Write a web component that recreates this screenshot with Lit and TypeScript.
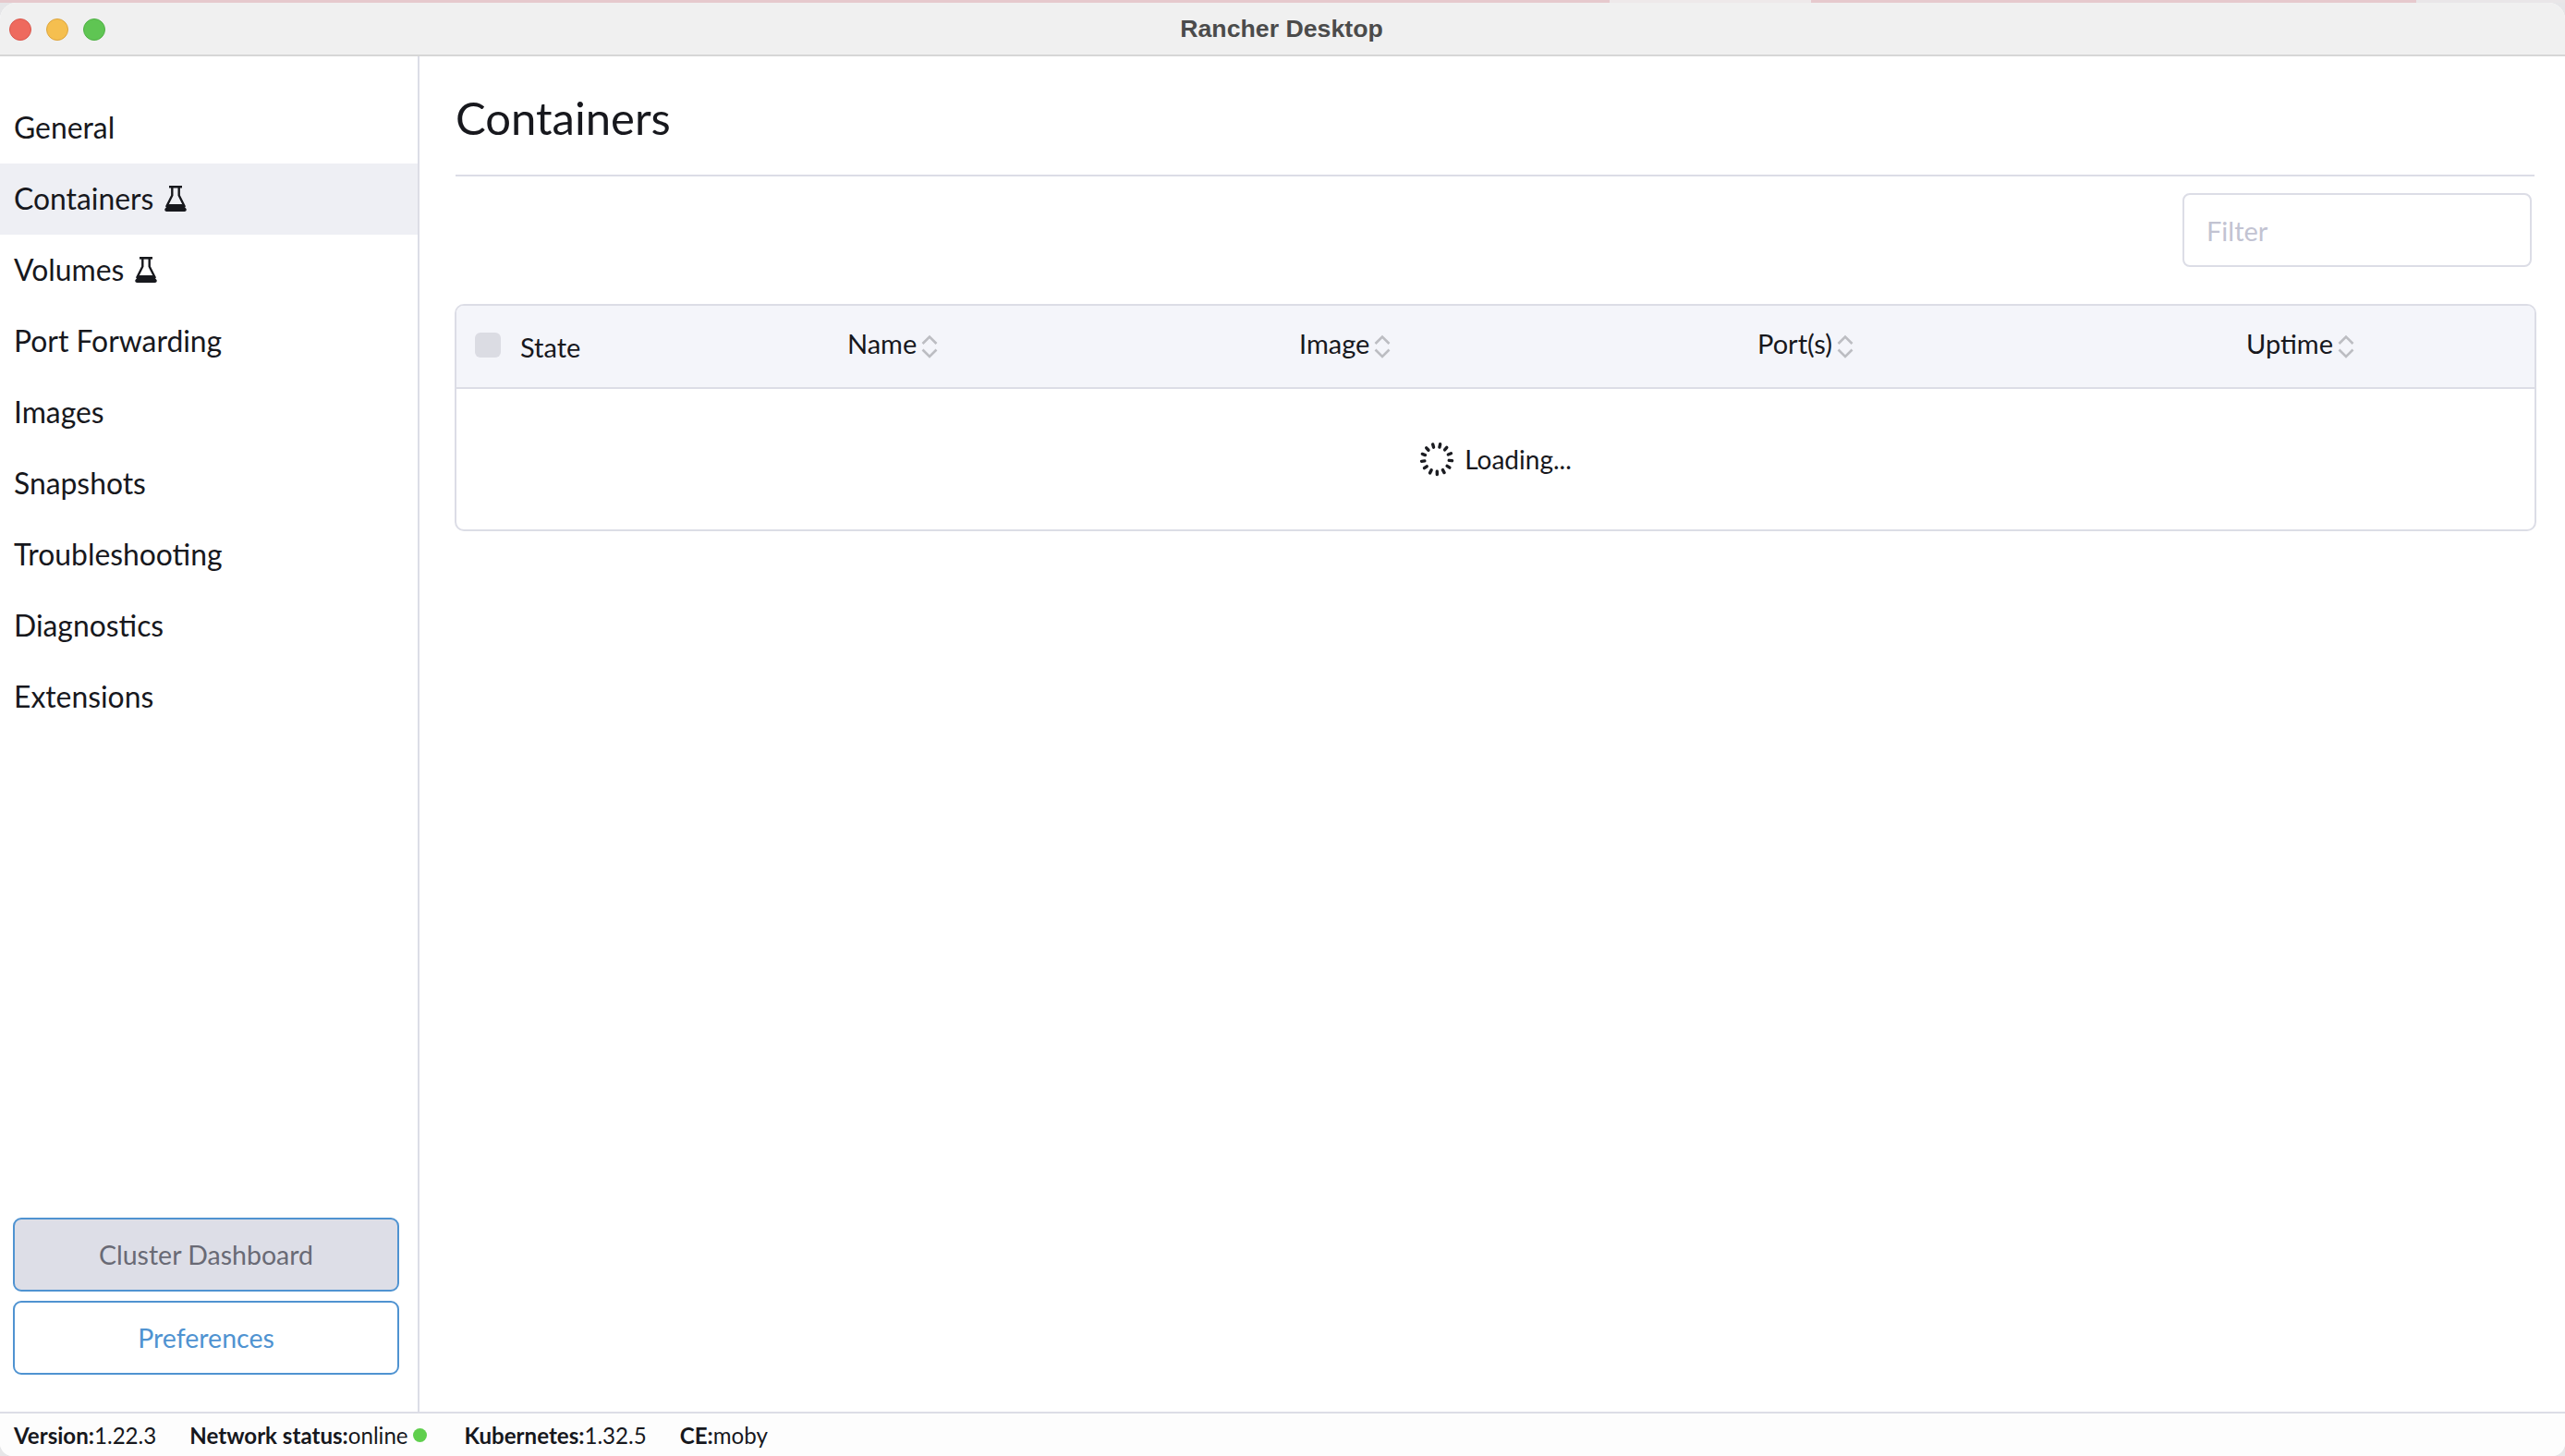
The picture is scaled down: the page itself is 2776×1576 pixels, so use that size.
import { LitElement, html, css, svg } from "lit";
import { customElement } from "lit/decorators.js";

const NAV = [
  { label: "General" },
  { label: "Containers", flask: true, active: true },
  { label: "Volumes", flask: true },
  { label: "Port Forwarding" },
  { label: "Images" },
  { label: "Snapshots" },
  { label: "Troubleshooting" },
  { label: "Diagnostics" },
  { label: "Extensions" },
];

const COLUMNS = ["Name", "Image", "Port(s)", "Uptime"];

const flask = html`<svg class="flask" viewBox="0 0 24 28">
  <path d="M5 1.300h14" fill="none" stroke="currentColor" stroke-width="2.600" />
  <path d="M8.300 1.500v9L2 23M15.700 1.500v9L22 23" fill="none" stroke="currentColor" stroke-width="2.400" />
  <path d="M4.500 20h15l4 5c.7 1.400-.2 3-2 3H2.500c-1.800 0-2.700-1.600-2-3z" fill="currentColor" />
</svg>`;

const sortIcon = html`<svg class="sort" viewBox="0 0 18 26">
  <path d="M1.500 10L9 2.500l7.500 7.500M1.500 16.500L9 24l7.500-7.500" fill="none" stroke="#bcbdc2" stroke-width="2.600" />
</svg>`;

// ticks of the loading spinner
const spinner = html`<svg class="spinner" viewBox="0 0 40 40">
  ${Array.from({ length: 13 }, (_, i) => {
    const a = (i / 13) * Math.PI * 2 + 0.1;
    const x1 = 20 + Math.cos(a) * 14;
    const y1 = 20 + Math.sin(a) * 14;
    const x2 = 20 + Math.cos(a) * 17.5;
    const y2 = 20 + Math.sin(a) * 17.5;
    return svg`<line x1=${x1} y1=${y1} x2=${x2} y2=${y2} stroke="#1b1c21" stroke-width="3.600" stroke-linecap="round" />`;
  })}
</svg>`;

@customElement("app-root")
export class AppRoot extends LitElement {
  static styles = css`
    :host {
      display: block;
      height: 1576px;
      background: #e6e6e8;
      font-family: Lato, "Open Sans", sans-serif;
      color: #17181d;
      overflow: hidden;
    }

    .strip {
      height: 3px;
      background: linear-gradient(
        to right,
        #e6c9cd 0,
        #e6c9cd 1742px,
        #eee9ea 1742px,
        #eee9ea 1960px,
        #e6c9cd 1960px,
        #e6c9cd 2615px,
        #e9e6e8 2615px
      );
    }

    .window {
      display: flex;
      flex-direction: column;
      height: 1573px;
      background: #fff;
      border-radius: 18px 18px 14px 14px;
      overflow: hidden;
    }

    .titlebar {
      position: relative;
      flex: none;
      display: flex;
      align-items: center;
      justify-content: center;
      height: 58px;
      box-sizing: border-box;
      padding-right: 2px;
      background: #f0f0f0;
      border-bottom: 2px solid #d6d6d6;
      font-family: "Liberation Sans", Arial, sans-serif;
      font-weight: 700;
      font-size: 26.700px;
      color: #4b4b4b;
    }

    .lights {
      position: absolute;
      left: 10px;
      top: 17px;
      display: flex;
      gap: 16px;
    }

    .light {
      width: 24px;
      height: 24px;
      border-radius: 50%;
      box-sizing: border-box;
    }

    .red {
      background: #ee6a5e;
      border: 1px solid #d9584e;
    }

    .yellow {
      background: #f5bf4f;
      border: 1px solid #dca53e;
    }

    .green {
      background: #5fc553;
      border: 1px solid #50b046;
    }

    .body {
      flex: 1;
      display: flex;
      min-height: 0;
    }

    .sidebar {
      flex: none;
      width: 454px;
      box-sizing: border-box;
      border-right: 2px solid #dcdde6;
      display: flex;
      flex-direction: column;
      padding-top: 39px;
    }

    .nav-item {
      display: flex;
      align-items: center;
      gap: 12px;
      height: 77px;
      box-sizing: border-box;
      padding: 0 0 2px 15px;
      font-size: 31.850px;
    }

    .nav-item.active {
      background: #eeeff4;
    }

    .flask {
      width: 24px;
      height: 28px;
    }

    .buttons {
      margin-top: auto;
      display: flex;
      flex-direction: column;
      gap: 10px;
      padding: 0 20px 40px 14px;
    }

    .btn {
      height: 80px;
      box-sizing: border-box;
      border: 2px solid #4f93d1;
      border-radius: 9px;
      display: flex;
      align-items: center;
      justify-content: center;
      font-size: 28.500px;
    }

    .btn.disabled {
      background: #dddee7;
      color: #696a75;
    }

    .btn.outline {
      background: #fff;
      color: #4f93d1;
    }

    .main {
      flex: 1;
      min-width: 0;
      padding: 0 33px 0 39px;
      display: flex;
      flex-direction: column;
    }

    h1 {
      margin: 0;
      height: 130px;
      box-sizing: border-box;
      padding-top: 36px;
      border-bottom: 2px solid #dcdde6;
      font-weight: 400;
      font-size: 49px;
      line-height: 60px;
    }

    .filter-row {
      display: flex;
      justify-content: flex-end;
      padding: 18px 3px 40px 0;
    }

    .filter {
      width: 378px;
      height: 80px;
      box-sizing: border-box;
      border: 2px solid #dcdde6;
      border-radius: 8px;
      padding-left: 24px;
      display: flex;
      align-items: center;
      font-size: 29px;
      color: #c2c3d2;
    }

    .table {
      margin-left: -1px;
      margin-right: -2px;
      border: 2px solid #dcdde6;
      border-radius: 10px;
      overflow: hidden;
    }

    .thead {
      display: grid;
      grid-template-columns: 423px 489px 496px 529px 1fr;
      height: 90px;
      box-sizing: border-box;
      background: #f4f5fa;
      border-bottom: 2px solid #dcdde6;
      font-size: 29px;
      align-items: center;
    }

    .th {
      display: flex;
      align-items: center;
      gap: 5px;
      padding-bottom: 7px;
    }

    .th-state {
      gap: 21px;
      padding: 0 0 0 20px;
    }

    .checkbox {
      width: 28px;
      height: 27px;
      margin-top: -4px;
      border-radius: 6px;
      background: #dbdce3;
    }

    .sort {
      width: 18px;
      height: 26px;
      margin-top: 7px;
    }

    .tbody {
      height: 152px;
      display: flex;
      align-items: center;
      justify-content: center;
      gap: 11px;
      font-size: 28px;
    }

    .spinner {
      width: 38px;
      height: 38px;
    }

    .status {
      flex: none;
      height: 48px;
      box-sizing: border-box;
      border-top: 2px solid #dcdde6;
      background: #fdfdfd;
      display: flex;
      align-items: center;
      padding-left: 15px;
      font-size: 24.100px;
    }

    .status b {
      font-weight: 700;
    }

    .stat {
      display: flex;
      align-items: center;
      margin-right: 36px;
    }

    .dot {
      width: 15px;
      height: 15px;
      border-radius: 50%;
      margin: 0 5px 0 5px;
      background: #5fcf4d;
    }
  `;

  render() {
    return html`
      <div class="strip"></div>
      <div class="window">
        <div class="titlebar">
          <div class="lights">
            <div class="light red"></div>
            <div class="light yellow"></div>
            <div class="light green"></div>
          </div>
          Rancher Desktop
        </div>
        <div class="body">
          <nav class="sidebar">
            ${NAV.map(
              (n) => html`<div class="nav-item ${n.active ? "active" : ""}">
                ${n.label}${n.flask ? flask : ""}
              </div>`,
            )}
            <div class="buttons">
              <div class="btn disabled">Cluster Dashboard</div>
              <div class="btn outline">Preferences</div>
            </div>
          </nav>
          <main class="main">
            <h1>Containers</h1>
            <div class="filter-row"><div class="filter">Filter</div></div>
            <div class="table">
              <div class="thead">
                <div class="th th-state"><span class="checkbox"></span>State</div>
                ${COLUMNS.map((c) => html`<div class="th">${c}${sortIcon}</div>`)}
              </div>
              <div class="tbody">${spinner}Loading...</div>
            </div>
          </main>
        </div>
        <footer class="status">
          <div class="stat"><b>Version:</b>1.22.3</div>
          <div class="stat"><b>Network status:</b>online<span class="dot"></span></div>
          <div class="stat"><b>Kubernetes:</b>1.32.5</div>
          <div class="stat"><b>CE:</b>moby</div>
        </footer>
      </div>
    `;
  }
}
